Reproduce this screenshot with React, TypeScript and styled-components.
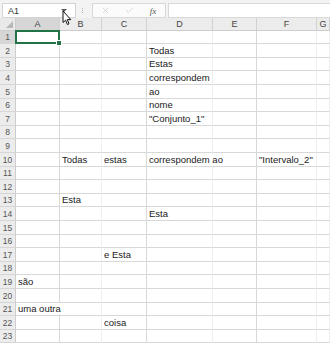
import styled, { createGlobalStyle } from 'styled-components';
import { X, Check } from 'lucide-react';

const GlobalStyle = createGlobalStyle`
  html, body {
    margin: 0;
    padding: 0;
    background: #ffffff;
  }
  body {
    font-family: 'Liberation Sans', Arial, sans-serif;
    overflow: hidden;
  }
`;

// column widths in px, faint = the gridline on its right barely shows
const columns = [
  { key: 'A', width: 44, faint: false },
  { key: 'B', width: 42, faint: true },
  { key: 'C', width: 45, faint: false },
  { key: 'D', width: 66, faint: true },
  { key: 'E', width: 44, faint: false },
  { key: 'F', width: 60, faint: true },
  { key: 'G', width: 0, faint: true },
];

const rowCount = 23;
const edges = Array.from({ length: rowCount + 1 }, (_, i) => Math.floor(40 + i * 13.6));
const rowHeights = edges.slice(1).map((e, i) => e - edges[i]);

const cells: Record<string, string> = {
  D2: 'Todas',
  D3: 'Estas',
  D4: 'correspondem',
  D5: 'ao',
  D6: 'nome',
  D7: '"Conjunto_1"',
  B10: 'Todas',
  C10: 'estas',
  D10: 'correspondem ao',
  F10: '"Intervalo_2"',
  B13: 'Esta',
  D14: 'Esta',
  C17: 'e Esta',
  A19: 'são',
  A21: 'uma outra',
  C22: 'coisa',
};

const Window = styled.div`
  position: relative;
  width: 330px;
  height: 343px;
  overflow: hidden;
  display: flex;
  flex-direction: column;
  background: #ffffff;
`;

const FormulaBar = styled.div`
  height: 27px;
  box-sizing: border-box;
  background: #f3f3f3;
  display: flex;
  align-items: flex-start;
  padding: 3px 0 0 2px;
`;

const NameBox = styled.div`
  width: 74px;
  height: 15px;
  box-sizing: border-box;
  background: #ffffff;
  border: 1px solid #d4d4d4;
  display: flex;
  align-items: center;
  justify-content: space-between;
  padding: 0 8px 0 5px;
  font-size: 9px;
  color: #333333;
`;

const Caret = styled.span`
  width: 0;
  height: 0;
  border-left: 3px solid transparent;
  border-right: 3px solid transparent;
  border-top: 3px solid #555555;
`;

const Separator = styled.div`
  width: 16px;
  height: 15px;
  display: flex;
  flex-direction: column;
  align-items: center;
  justify-content: center;
  gap: 1px;
  padding-right: 3px;
  box-sizing: border-box;

  span {
    width: 1px;
    height: 1px;
    background: #b0b0b0;
  }
`;

const ButtonBox = styled.div`
  width: 74px;
  height: 15px;
  box-sizing: border-box;
  background: #fbfbfb;
  border: 1px solid #d8d8d8;
  display: grid;
  grid-template-columns: repeat(3, 1fr);
  align-items: center;
  justify-items: center;
  color: #c2c2c2;
`;

const Fx = styled.span`
  font-family: 'Liberation Serif', 'Times New Roman', serif;
  font-style: italic;
  font-size: 9px;
  color: #555555;
`;

const FormulaInput = styled.div`
  flex: 1;
  height: 15px;
  margin-left: 2px;
  box-sizing: border-box;
  background: #ffffff;
  border: 1px solid #d8d8d8;
  border-right: none;
`;

const Sheet = styled.div<{ $rows: string; $cols: string }>`
  display: grid;
  grid-template-columns: ${(p) => p.$cols};
  grid-template-rows: ${(p) => p.$rows};
`;

const Corner = styled.div`
  position: relative;
  box-sizing: border-box;
  background: #e9e9e9;
  border-right: 1px solid #cdcdcd;
  border-bottom: 1px solid #cdcdcd;

  &::after {
    content: '';
    position: absolute;
    right: 2px;
    bottom: 2px;
    border-left: 7px solid transparent;
    border-bottom: 7px solid #b8b8b8;
  }
`;

const ColHead = styled.div<{ $active?: boolean }>`
  box-sizing: border-box;
  background: ${(p) => (p.$active ? '#d6d6d6' : '#ececec')};
  border-right: 1px solid #d2d2d2;
  border-bottom: 1px solid ${(p) => (p.$active ? '#9a9a9a' : '#cdcdcd')};
  display: flex;
  align-items: center;
  justify-content: center;
  font-size: 9px;
  color: #444444;
`;

const RowHead = styled.div<{ $active?: boolean }>`
  box-sizing: border-box;
  background: ${(p) => (p.$active ? '#d6d6d6' : '#ececec')};
  border-right: 1px solid ${(p) => (p.$active ? '#9a9a9a' : '#cdcdcd')};
  border-bottom: 1px solid #d6d6d6;
  display: flex;
  align-items: center;
  justify-content: center;
  font-size: 8.5px;
  color: #555555;
`;

const Cell = styled.div<{ $faint?: boolean; $selected?: boolean }>`
  position: relative;
  box-sizing: border-box;
  min-width: 0;
  border-right: 1px solid ${(p) => (p.$faint ? '#efefef' : '#d8d8d8')};
  border-bottom: 1px solid #d8d8d8;
  display: flex;
  align-items: flex-end;
  padding: 0 0 1px 2px;
  white-space: nowrap;

  ${(p) =>
    p.$selected &&
    `
    &::before {
      content: '';
      position: absolute;
      left: -1px;
      top: -1px;
      right: -1px;
      bottom: -1px;
      border: 2px solid #217346;
      z-index: 2;
    }
    &::after {
      content: '';
      position: absolute;
      right: -3px;
      bottom: -3px;
      width: 4px;
      height: 4px;
      background: #217346;
      border: 1px solid #ffffff;
      z-index: 3;
    }
  `}
`;

const CellText = styled.span`
  position: relative;
  z-index: 1;
  background: #ffffff;
  font-size: 9.5px;
  line-height: 11px;
  color: #1a1a1a;
`;

const Pointer = styled.svg`
  position: absolute;
  left: 62px;
  top: 10px;
  z-index: 5;
`;

function App(): JSX.Element {
  const colTemplate = ['16px', ...columns.map((c) => (c.width ? `${c.width}px` : '1fr'))].join(' ');
  const rowTemplate = ['13px', ...rowHeights.map((h) => `${h}px`)].join(' ');

  return (
    <Window>
      <GlobalStyle />
      <FormulaBar>
        <NameBox>
          <span>A1</span>
          <Caret />
        </NameBox>
        <Separator>
          <span />
          <span />
          <span />
        </Separator>
        <ButtonBox>
          <X size={9} strokeWidth={1.6} />
          <Check size={9} strokeWidth={1.6} />
          <Fx>fx</Fx>
        </ButtonBox>
        <FormulaInput />
      </FormulaBar>

      <Sheet $cols={colTemplate} $rows={rowTemplate}>
        <Corner />
        {columns.map((c) => (
          <ColHead key={c.key} $active={c.key === 'A'}>
            {c.key}
          </ColHead>
        ))}
        {rowHeights.map((_, r) => {
          const row = r + 1;
          return [
            <RowHead key={`h${row}`} $active={row === 1}>
              {row}
            </RowHead>,
            ...columns.map((c) => {
              const id = `${c.key}${row}`;
              return (
                <Cell key={id} $faint={c.faint} $selected={id === 'A1'}>
                  {cells[id] && <CellText>{cells[id]}</CellText>}
                </Cell>
              );
            }),
          ];
        })}
      </Sheet>

      <Pointer width="10" height="16" viewBox="0 0 10 16">
        <path d="M1 1 L1 12.5 L3.6 10.2 L5.4 14.5 L7 13.8 L5.3 9.6 L8.8 9.6 Z" fill="#ffffff" stroke="#111111" strokeWidth="1" strokeLinejoin="round" />
      </Pointer>
    </Window>
  );
}

export default App;
